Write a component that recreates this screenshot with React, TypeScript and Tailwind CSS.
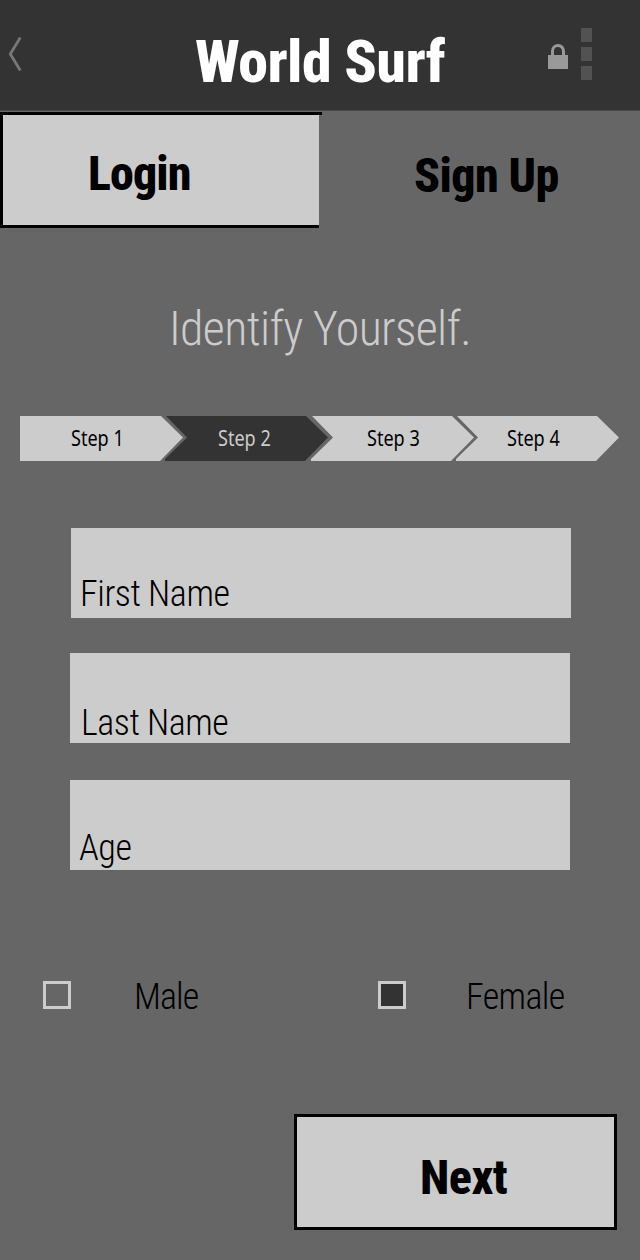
const cond = "font-['Roboto_Condensed','Roboto',sans-serif] [font-stretch:75%]";

function Txt({ className, children }: { className: string; children: string }) {
  return (
    <span className={`block w-fit whitespace-nowrap leading-none ${cond} ${className}`}>
      {children}
    </span>
  );
}

function Step({ label, className, text }: { label: string; className: string; text: string }) {
  return (
    <li className={`h-[45px] w-[163px] shrink-0 pt-[9px] ${className}`}>
      <span
        className={`block w-fit origin-left scale-x-[0.82] whitespace-nowrap font-['Noto_Sans',sans-serif] text-[22px] font-normal leading-[24px] ${text}`}
      >
        {label}
      </span>
    </li>
  );
}

function Field({ label, className, text }: { label: string; className: string; text: string }) {
  return (
    <div className={`h-[90px] w-[500px] bg-[#ccc] ${className}`}>
      <Txt className={`text-[36px] font-[330] tracking-[-0.45px] text-black ${text}`}>{label}</Txt>
    </div>
  );
}

export default function App() {
  return (
    <div className="flex h-[1260px] w-[640px] flex-col overflow-hidden bg-[#666]">
      <header className="flex h-[111px] shrink-0 border-b border-[#4a4a4a] bg-[#333]">
        <svg className="ml-[8px] mt-[37px] h-[34px] w-[14px]" viewBox="0 0 14 34" fill="none">
          <path d="M12.3 0.5 L2.3 17 L12.3 33.5" stroke="#777" strokeWidth="2.8" />
        </svg>
        <div className="ml-[173px] mt-[32px] w-[353px]">
          <Txt className="text-[60px] font-[760] tracking-[-0.6px] text-white">World Surf</Txt>
        </div>
        <svg className="mt-[43px] h-[27px] w-[20px]" viewBox="0 0 20 27">
          <path d="M4.5 13 V8 a5.5 5.5 0 0 1 11 0 V13" fill="none" stroke="#999" strokeWidth="3" />
          <rect y="12" width="20" height="14" fill="#999" />
        </svg>
        <div className="ml-[13px] mt-[28px] flex flex-col gap-[5px]">
          <i className="h-[14px] w-[11px] bg-[#525252]" />
          <i className="h-[14px] w-[11px] bg-[#525252]" />
          <i className="h-[14px] w-[11px] bg-[#525252]" />
        </div>
      </header>

      <nav className="mt-px flex h-[115px] shrink-0">
        <div className="h-[115px] w-[322px]">
          <div className="h-[3px] bg-black" />
          <div className="h-[113px] w-[319px] border-b-[3px] border-l-[3px] border-black bg-[#ccc] pl-[85px] pt-[35px]">
            <Txt className="text-[48px] font-[760] tracking-[-0.9px] text-black">Login</Txt>
          </div>
        </div>
        <div className="pl-[92px] pt-[40px]">
          <Txt className="text-[48px] font-[760] tracking-[-0.6px] text-black">Sign Up</Txt>
        </div>
      </nav>

      <h1 className="ml-[169px] mt-[78px] h-[48px] shrink-0">
        <Txt className="text-[48px] font-[330] tracking-[-0.65px] text-[#ccc]">Identify Yourself.</Txt>
      </h1>

      <ol className="ml-[20px] mt-[63px] flex h-[45px] shrink-0">
        <Step label="Step 1" text="ml-[51px] text-black" className="bg-[#ccc] [clip-path:polygon(0_0,141px_0,163px_21.5px,140px_45px,0_45px)]" />
        <Step label="Step 2" text="ml-[53px] text-[#ccc]" className="-ml-[18px] bg-[#333] [clip-path:polygon(1px_0,141px_0,163px_21.5px,140px_45px,0_45px,0_43px,22px_21.5px)]" />
        <Step label="Step 3" text="ml-[56px] text-black" className="-ml-[17px] bg-[#ccc] [clip-path:polygon(1px_0,141px_0,163px_21.5px,140px_45px,0_45px,0_43px,22px_21.5px)]" />
        <Step label="Step 4" text="ml-[51px] text-black" className="-ml-[18px] bg-[#ccc] [clip-path:polygon(1px_0,141px_0,163px_21.5px,140px_45px,0_45px,0_43px,22px_21.5px)]" />
      </ol>

      <form className="mt-[67px] shrink-0">
        <Field label="First Name" className="ml-[71px] pt-[48px]" text="ml-[9px]" />
        <Field label="Last Name" className="ml-[70px] mt-[35px] pt-[52px]" text="ml-[11px]" />
        <Field label="Age" className="ml-[70px] mt-[37px] pt-[50px]" text="ml-[9px]" />

        <div className="mt-[109px] flex h-[40px]">
          <div className="flex w-[335px]">
            <i className="ml-[43px] mt-[2px] h-[28px] w-[28px] border-[3px] border-[#ccc]" />
            <Txt className="ml-[63px] text-[36px] font-[330] tracking-[-0.9px] text-black">Male</Txt>
          </div>
          <div className="flex">
            <i className="ml-[43px] mt-[2px] h-[28px] w-[28px] border-[3px] border-[#ccc] bg-[#333]" />
            <Txt className="ml-[60px] text-[36px] font-[330] tracking-[-0.6px] text-black">Female</Txt>
          </div>
        </div>

        <button type="button" className="ml-[294px] mt-[95px] block h-[116px] w-[323px] border-[3px] border-black bg-[#ccc] pl-[123px]">
          <Txt className="mt-[12px] text-[48px] font-[760] tracking-[-0.5px] text-black">Next</Txt>
        </button>
      </form>
    </div>
  );
}
